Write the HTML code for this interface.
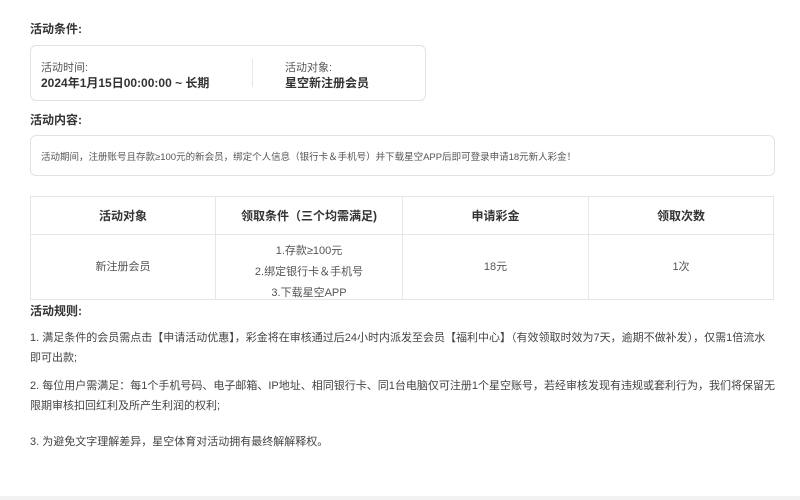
<!DOCTYPE html>
<html><head><meta charset="utf-8"><style>
*{margin:0;padding:0;box-sizing:border-box}
body{width:800px;height:500px;background:#fff;position:relative;overflow:hidden;font-family:"Liberation Sans","Noto Sans CJK SC",sans-serif;color:#333}
.a{position:absolute;white-space:nowrap}
.t{font-size:12px;font-weight:bold;color:#333}
.box{position:absolute;border:1px solid #e3e3e3;border-radius:6px}
.s{font-size:11px;color:#555}
table{position:absolute;left:30px;top:196px;width:744px;border-collapse:collapse;font-size:11px;color:#555}
td,th{border:1px solid #e6e6e6;text-align:center}
th{height:38px;font-size:12px;font-weight:bold;color:#333}
td{height:65px;line-height:21px;vertical-align:top;padding:0}
td div{height:63px;overflow:visible;padding-top:6px}
.r{font-size:11px;color:#444;left:30px;width:745px;white-space:normal;line-height:20px}
</style></head><body>
<div class="a t" style="left:30px;top:20px">活动条件:</div>
<div class="box" style="left:30px;top:45px;width:396px;height:56px"></div>
<div class="a s" style="left:41px;top:59px">活动时间:</div>
<div class="a" style="left:41px;top:74px;font-size:12px;font-weight:bold">2024年1月15日00:00:00 ~ 长期</div>
<div class="a" style="left:252px;top:59px;width:1px;height:28px;background:#e6e6e6"></div>
<div class="a s" style="left:285px;top:59px">活动对象:</div>
<div class="a" style="left:285px;top:74px;font-size:12px;font-weight:bold">星空新注册会员</div>
<div class="a t" style="left:30px;top:111px">活动内容:</div>
<div class="box" style="left:30px;top:135px;width:745px;height:41px"></div>
<div class="a" style="left:41px;top:149px;font-size:9.5px;color:#555">活动期间，注册账号且存款≥100元的新会员，绑定个人信息（银行卡＆手机号）并下载星空APP后即可登录申请18元新人彩金！</div>
<table><tr><th style="width:185px">活动对象</th><th style="width:187px">领取条件（三个均需满足)</th><th style="width:186px">申请彩金</th><th>领取次数</th></tr>
<tr><td><div style="padding-top:22px">新注册会员</div></td><td><div>1.存款≥100元<br>2.绑定银行卡＆手机号<br>3.下载星空APP</div></td><td><div style="padding-top:22px">18元</div></td><td><div style="padding-top:22px">1次</div></td></tr></table>
<div class="a t" style="left:30px;top:302px">活动规则:</div>
<div class="a r" style="top:328px">1. 满足条件的会员需点击【申请活动优惠】，彩金将在审核通过后24小时内派发至会员【福利中心】（有效领取时效为7天，逾期不做补发），仅需1倍流水即可出款;</div>
<div class="a r" style="top:376px">2. 每位用户需满足：每1个手机号码、电子邮箱、IP地址、相同银行卡、同1台电脑仅可注册1个星空账号，若经审核发现有违规或套利行为，我们将保留无限期审核扣回红利及所产生利润的权利;</div>
<div class="a r" style="top:432px">3. 为避免文字理解差异，星空体育对活动拥有最终解解释权。</div>
<div class="a" style="left:0;top:496px;width:800px;height:4px;background:#f2f2f2"></div>
</body></html>
